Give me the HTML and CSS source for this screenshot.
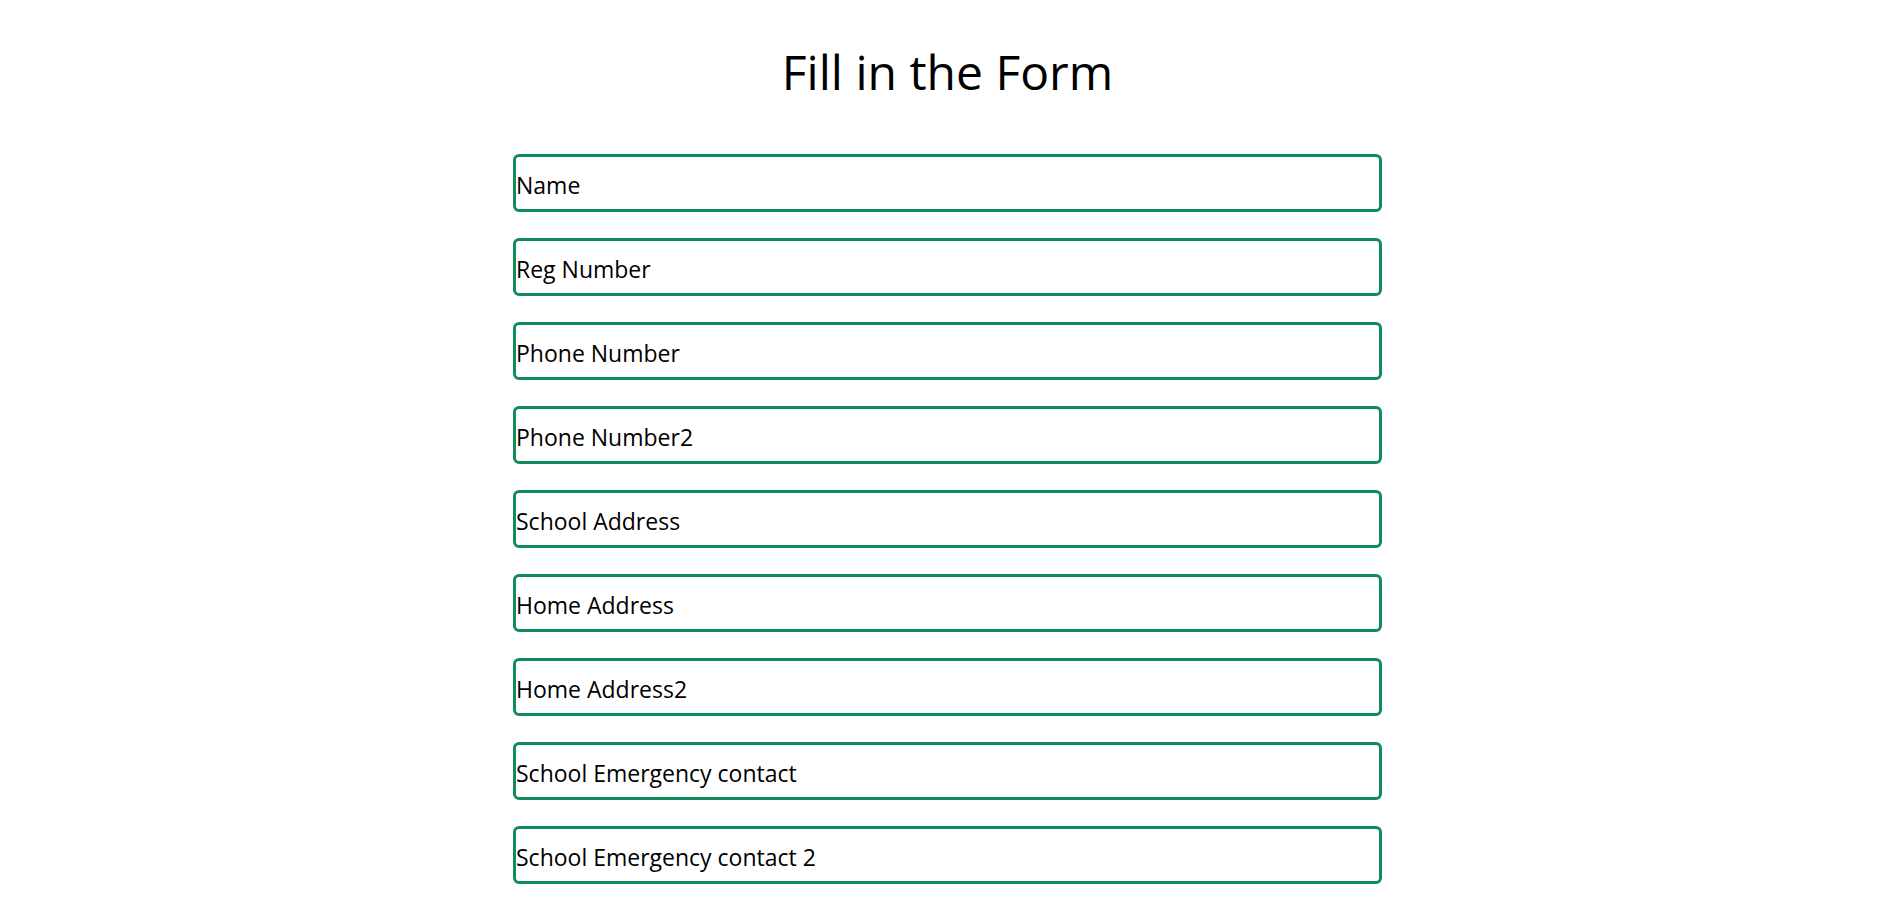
FILE: index.html
```html
<!DOCTYPE html>
<html lang="en">
<head>
<meta charset="utf-8">
<title>Fill in the Form</title>
<link rel="stylesheet" href="styles.css">
</head>
<body>
<main class="page">
  <h1 class="title">Fill in the Form</h1>
  <form class="form">
    <input class="field" type="text" placeholder="Name">
    <input class="field" type="text" placeholder="Reg Number">
    <input class="field" type="text" placeholder="Phone Number">
    <input class="field" type="text" placeholder="Phone Number2">
    <input class="field" type="text" placeholder="School Address">
    <input class="field" type="text" placeholder="Home Address">
    <input class="field" type="text" placeholder="Home Address2">
    <input class="field" type="text" placeholder="School Emergency contact">
    <input class="field" type="text" placeholder="School Emergency contact 2">
  </form>
</main>
</body>
</html>
```
FILE: styles.css
```css
html, body {
  margin: 0;
  padding: 0;
  background: #fff;
}
body {
  font-family: "Open Sans", "Noto Sans", sans-serif;
  color: #000;
}
.page {
  display: flex;
  flex-direction: column;
  align-items: center;
  padding-left: 4px;
}
.title {
  margin: 38px 0 0;
  font-size: 48px;
  line-height: 68px;
  font-weight: 400;
}
.form {
  width: 869px;
  margin-top: 48px;
  display: flex;
  flex-direction: column;
  gap: 26px;
}
.field {
  box-sizing: border-box;
  height: 58px;
  width: 100%;
  border: 3px solid #138c5b;
  border-radius: 6px;
  padding: 3px 0 0 0;
  font-family: inherit;
  font-size: 23px;
  color: #000;
  background: #fff;
  outline: none;
}
.field::placeholder {
  color: #000;
  opacity: 1;
}
```
